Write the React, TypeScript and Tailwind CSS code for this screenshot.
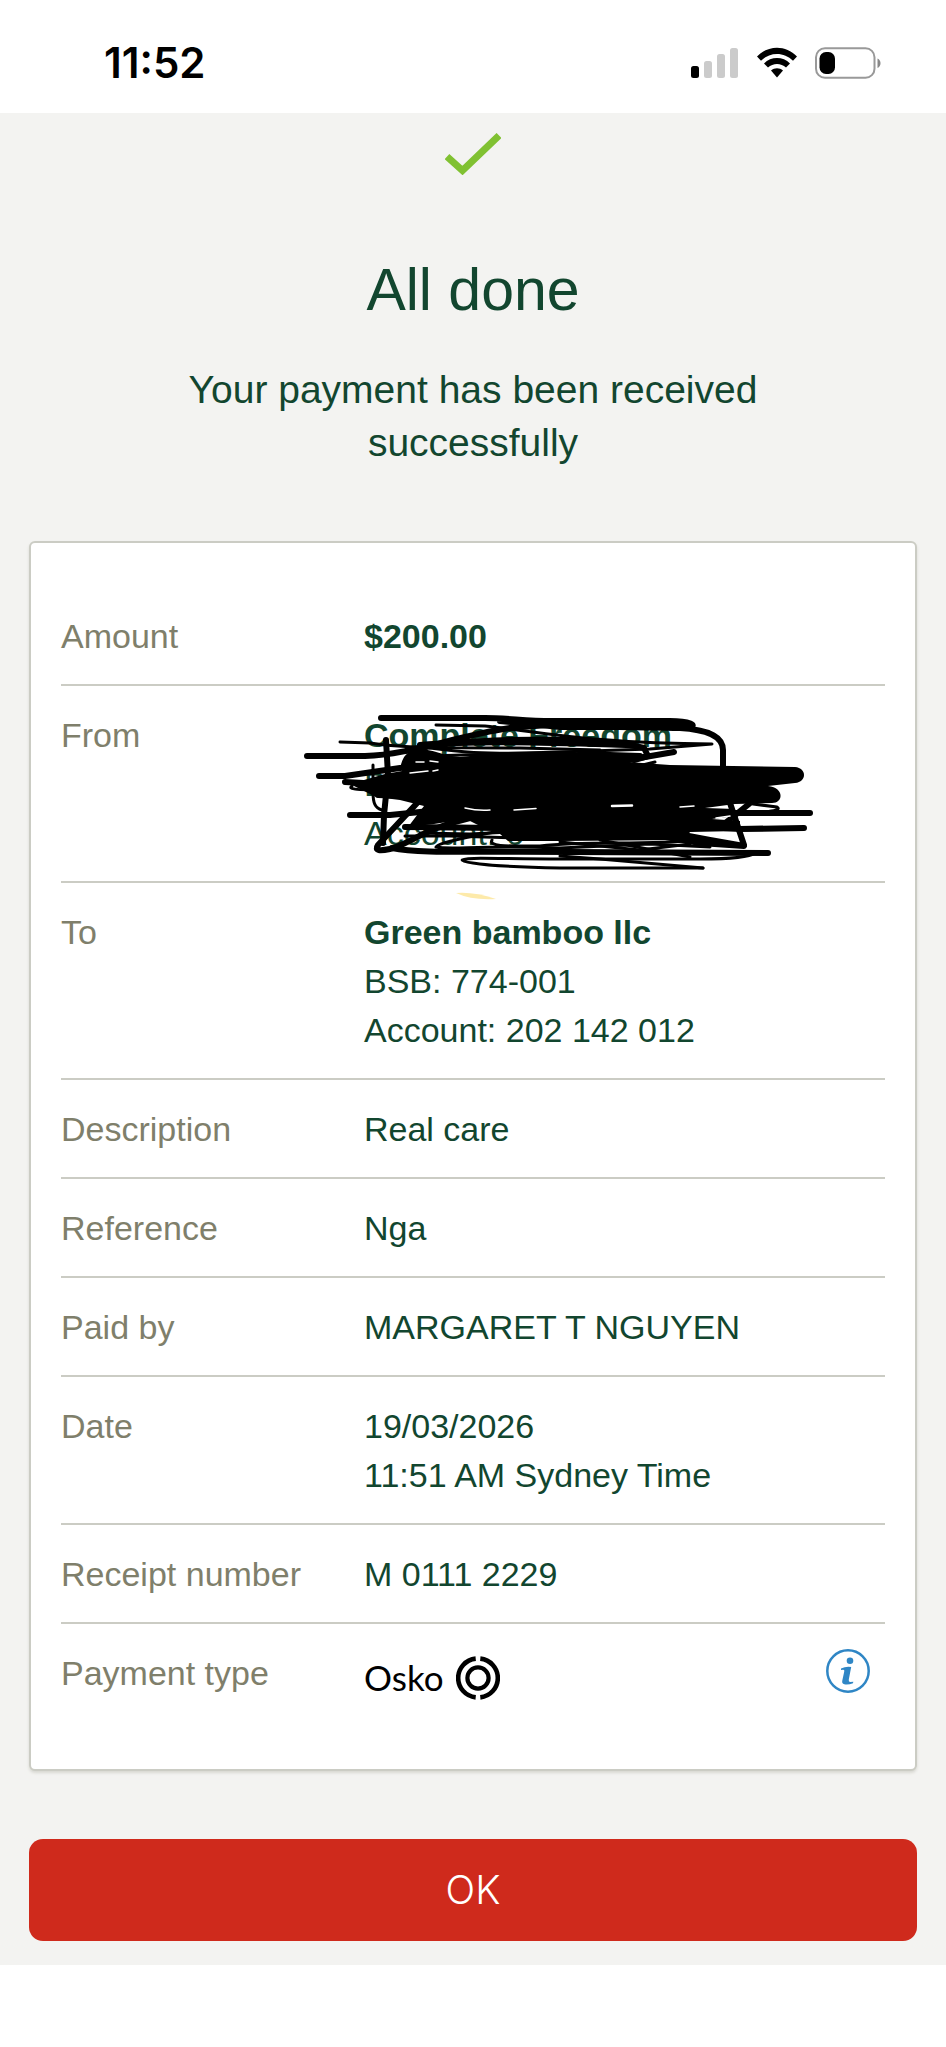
import type { ReactNode } from "react";

import { clsx } from "clsx";

function SignalIcon() {
  return (
    <svg viewBox="0 0 48 32" className="h-8 w-12" aria-hidden="true">
      <rect x="0" y="19" width="8" height="12" rx="2.5" fill="#000" />
      <rect x="13" y="14" width="8" height="17" rx="2.5" fill="#cbcbcb" />
      <rect x="26" y="7" width="8" height="24" rx="2.5" fill="#cbcbcb" />
      <rect x="39" y="1" width="8" height="30" rx="2.5" fill="#cbcbcb" />
    </svg>
  );
}

function WifiIcon() {
  return (
    <svg viewBox="0 0 42 32" className="h-8 w-[42px]" aria-hidden="true">
      <path d="M1 9.5 C12 -2.2 30 -2.2 41 9.5 L37 13.7 C28 4.6 14 4.6 5 13.7 Z" />
      <path d="M8 16.5 C15 9.2 27 9.2 34 16.5 L30 20.6 C25 15.8 17 15.8 12 20.6 Z" />
      <path d="M15 23.6 C18.5 20.4 23.5 20.4 27 23.6 L21 30.5 Z" />
    </svg>
  );
}

function BatteryIcon() {
  return (
    <svg viewBox="0 0 67 32" className="h-8 w-[67px]" aria-hidden="true">
      <rect
        x="1"
        y="1.2"
        width="58.5"
        height="29.6"
        rx="9"
        fill="none"
        stroke="#999"
        strokeWidth="2"
      />
      <rect x="4.5" y="5" width="15.5" height="22" rx="6.5" />
      <path d="M62.5 11.5 C66.5 13 66.5 19.5 62.5 21 Z" fill="#888" />
    </svg>
  );
}

function StatusBar() {
  return (
    <header className="flex h-[113px] items-center justify-between pt-3 pr-16 pl-[104px] text-black">
      <time className="font-['Inter',sans-serif] text-[42px] leading-none font-semibold">
        11:52
      </time>
      <div className="flex items-center gap-[17px]">
        <SignalIcon />
        <WifiIcon />
        <BatteryIcon />
      </div>
    </header>
  );
}

function OskoLogo() {
  return (
    <span className="flex items-center gap-3 pt-1 text-black">
      <span className="font-['Lato',sans-serif] text-[35px]">Osko</span>
      <svg viewBox="0 0 44 44" className="size-11" fill="none" stroke="#000">
        <circle cx="22" cy="22" r="10.6" strokeWidth="4.2" />
        <path d="M19.7 2.6 A19.5 19.5 0 0 0 19.7 41.4" strokeWidth="4.6" />
        <path d="M24.3 2.6 A19.5 19.5 0 0 1 24.3 41.4" strokeWidth="4.6" />
      </svg>
    </span>
  );
}

function InfoButton() {
  return (
    <button type="button" aria-label="About this payment type" className="mr-[15px]">
      <svg viewBox="0 0 44 44" className="size-11">
        <circle cx="22" cy="22" r="20.7" fill="none" stroke="#2f86c5" strokeWidth="2.5" />
        <circle cx="24" cy="11.7" r="3.3" fill="#2f86c5" />
        <path
          d="M15 19.4 Q20 17.2 25.2 18 L22.8 30.5 Q22.4 32.9 24 32.9 L27.3 32.7 L27 34.2 Q22.5 36 18.3 35.3 Q15.6 34.8 16.3 31.5 L18.2 22.7 Q18.8 20.7 17.3 20.7 L15 20.9 Z"
          fill="#2f86c5"
        />
      </svg>
    </button>
  );
}

// Marker strokes drawn over the sender's account details
function Scribble() {
  return (
    <svg
      viewBox="300 710 520 195"
      className="pointer-events-none absolute -top-px -left-16 h-[195px] w-[520px] max-w-none"
      fill="none"
      stroke="#000"
      strokeLinecap="round"
      strokeLinejoin="round"
      aria-hidden="true"
    >
      <path
        d="M404 760 L420 752 L460 757 L500 753 L560 752 L606 753 L628 762 L670 765 L795 767 C807 768 807 782 795 783 L768 786 C784 787 784 803 772 803 L735 804 L705 808 L735 809 V816 L712 819 L740 821 V831 L690 832 L684 840 L560 841 L508 841 L500 834 L480 826 L466 819 L434 824 L408 827 L424 806 L400 800 L376 797 L350 784 L385 774 L402 771 Z"
        fill="#000"
        stroke="none"
      />
      <g strokeWidth="6">
        <path d="M381 718 H485 C510 718 530 722 560 721 H670 C690 721 698 726 689 727 H560 L500 721" />
        <path d="M530 723 L560 725 H660" />
        <path d="M560 724 C600 728 640 727 680 728 C712 730 723 738 723 750 V768" />
        <path d="M307 756 H365 C410 755 455 736 510 728 L560 724" />
        <path d="M319 776 L345 776 L400 768 L450 764 L520 755" />
        <path d="M345 782 L400 785 L480 778" />
        <path d="M386 740 L388 775 L384 815 L383 843" />
        <path d="M419 801 L378 845 C374 851 380 851 390 849 C408 845 425 828 470 818" />
        <path d="M350 815 H390 L430 811 L480 808" />
        <path d="M392 848 C420 854 470 851 570 852 L768 853" />
        <path d="M700 813 H810" />
        <path d="M690 826 L740 829 L804 828" />
        <path d="M730 803 L744 845" />
        <path d="M749 804 L724 824" />
        <path d="M678 834 L710 840 L744 846 L700 843 L660 836" />
        <path d="M674 752 L645 757 L618 762" />
        <path d="M410 750 C470 736 600 737 644 748 L648 756 L634 760" />
        <path d="M404 765 C408 748 425 750 450 760" />
        <path d="M405 827 L500 828" />
        <path d="M420 745 C480 740 560 743 630 745" />
        <path d="M378 795 L430 797" />
        <path d="M580 754 L640 756 L610 761" />
      </g>
      <g strokeWidth="3">
        <path d="M436 725 L485 726 C540 732 600 744 712 744 L650 749 L560 752 L430 756" />
        <path d="M340 742 L370 743 C400 748 440 748 520 748 L600 750" />
        <path d="M430 748 C460 752 480 754 540 753" />
        <path d="M373 765 V792 C373 803 375 808 382 810" />
        <path d="M352 786 C348 789 352 790 390 790 L420 793" />
        <path d="M753 804 L777 807 C784 811 760 813 740 813" />
        <path d="M405 836 L450 836 L520 838" />
        <path d="M420 833 L470 834 L510 832" />
        <path d="M500 831 C480 835 438 842 436 847 C450 850 480 845 560 848 L650 844 L710 847" />
        <path d="M492 840 C488 847 510 846 540 846 C590 840 640 846 700 840" />
        <path d="M560 842 L640 850 L690 844" />
        <path d="M600 840 L690 857" />
        <path d="M703 868 L560 868 C510 867 462 864 462 860 C462 857 500 859 560 859 H700 C730 859 750 857 755 853" />
        <path d="M560 856 L600 859 L703 868" />
        <path d="M655 762 L630 768" />
      </g>
      {/* gaps where the paper still shows */}
      <g stroke="#fff" strokeWidth="1.5">
        <path d="M465 808 Q478 811 490 810" />
        <path d="M514 810 L536 808.5" />
        <path d="M612 806 L632 805.5" strokeWidth="2.5" />
        <path d="M410 773 L428 771 M433 771 L438 770" />
        <path d="M416 762 H424 M430 761 L438 762" />
        <path d="M680 807 L694 806 M716 818 L730 816" />
      </g>
      <path d="M456 893 Q474 891.5 496 899 Q472 900.5 456 893 Z" fill="#fdeaaa" stroke="none" />
    </svg>
  );
}

function DetailRow({
  label,
  children,
  last = false,
}: {
  label: string;
  children: ReactNode;
  last?: boolean;
}) {
  return (
    <div
      className={clsx(
        "grid grid-cols-[303px_1fr] pt-[25px] pb-[23px]",
        !last && "border-b-2 border-[#cbccc4]",
      )}
    >
      <dt className="text-[#7f7f6b]">{label}</dt>
      <dd className="relative">{children}</dd>
    </div>
  );
}

export default function App() {
  return (
    <div className="min-h-screen bg-white font-['Liberation_Sans',Arial,sans-serif] text-[#12462f]">
      <StatusBar />

      <main className="bg-[#f3f3f1] px-[29px] pt-5 pb-6">
        <svg viewBox="0 0 56 42" className="mx-auto h-[42px] w-14" aria-hidden="true">
          <path d="M2 23.5 L17.5 37.5 L54 2.5" fill="none" stroke="#80c132" strokeWidth="7" />
        </svg>

        <h1 className="mt-20 text-center text-[59px] leading-[70px]">All done</h1>
        <p className="mx-auto mt-[38px] max-w-[640px] text-center text-[39px] leading-[53px]">
          Your payment has been received successfully
        </p>

        <dl className="mt-18 rounded-md border-2 border-[#cbccc4] bg-white px-[30px] pt-11 pb-11 text-[34px] leading-[49px] shadow-[0_2px_3px_#d8d8d2]">
          <DetailRow label="Amount">
            <strong>$200.00</strong>
          </DetailRow>
          <DetailRow label="From">
            <strong>Complete Freedom</strong>
            <p>BSB:</p>
            <p>Account: 0</p>
            <Scribble />
          </DetailRow>
          <DetailRow label="To">
            <strong>Green bamboo llc</strong>
            <p>BSB: 774-001</p>
            <p>Account: 202 142 012</p>
          </DetailRow>
          <DetailRow label="Description">Real care</DetailRow>
          <DetailRow label="Reference">Nga</DetailRow>
          <DetailRow label="Paid by">MARGARET T NGUYEN</DetailRow>
          <DetailRow label="Date">
            <p>19/03/2026</p>
            <p>11:51 AM Sydney Time</p>
          </DetailRow>
          <DetailRow label="Receipt number">M 0111 2229</DetailRow>
          <DetailRow label="Payment type" last>
            <div className="flex items-start justify-between">
              <OskoLogo />
              <InfoButton />
            </div>
          </DetailRow>
        </dl>

        <button
          type="button"
          className="mt-17 h-[102px] w-full rounded-[14px] bg-[#cf2a1c] font-['Inter',sans-serif] text-[39px] font-light text-white"
        >
          OK
        </button>
      </main>
    </div>
  );
}
